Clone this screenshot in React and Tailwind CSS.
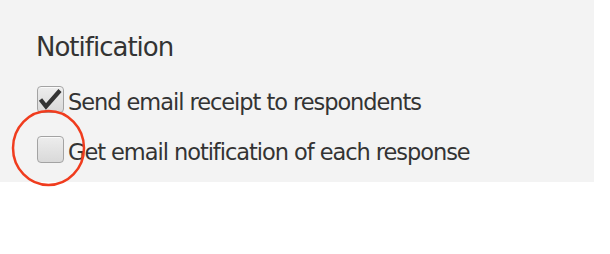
const ROWS = [
  { label: 'Send email receipt to respondents', checked: true },
  { label: 'Get email notification of each response', checked: false },
]

function Box({ checked }) {
  return (
    <div className="w-[27px] h-[27px] shrink-0 rounded-[4px] border border-[#a3a3a3] bg-gradient-to-b from-[#ededed] to-[#d9d9d9] shadow-[inset_0_1px_0_#fafafa]">
      {checked && (
        <svg width="27" height="27" viewBox="0 0 27 27" className="-mt-px -ml-px">
          <path d="M3.5 13.5 L9 20.5 L23 4.5" fill="none" stroke="#333" strokeWidth="4.2" strokeLinejoin="miter" />
        </svg>
      )}
    </div>
  )
}

export default function App() {
  return (
    <div className="w-[610px] h-[254px] bg-white" style={{ fontFamily: '"DejaVu Sans", Verdana, sans-serif' }}>
      <div className="relative w-[594px] h-[182px] bg-[#f3f3f3] pl-[37px] pt-[34px] text-[#333]">
        <h2 className="text-[26px] leading-[26px] tracking-[-1px] -ml-px">Notification</h2>

        <div className="mt-[26px] flex flex-col gap-[23px]">
          {ROWS.map(r => (
            <label key={r.label} className="flex items-start h-[27px] gap-[4px]">
              <Box checked={r.checked} />
              <span className="text-[22.5px] leading-[28px] pt-[2px] tracking-[-1.05px] whitespace-nowrap">{r.label}</span>
            </label>
          ))}
        </div>

        {/* highlight ring */}
        <svg className="absolute left-[11px] top-[109px] pointer-events-none" width="76" height="78" viewBox="0 0 76 78">
          <ellipse cx="37.5" cy="39" rx="35.5" ry="37" fill="none" stroke="#f03c1e" strokeWidth="2.5" />
        </svg>
      </div>
    </div>
  )
}
